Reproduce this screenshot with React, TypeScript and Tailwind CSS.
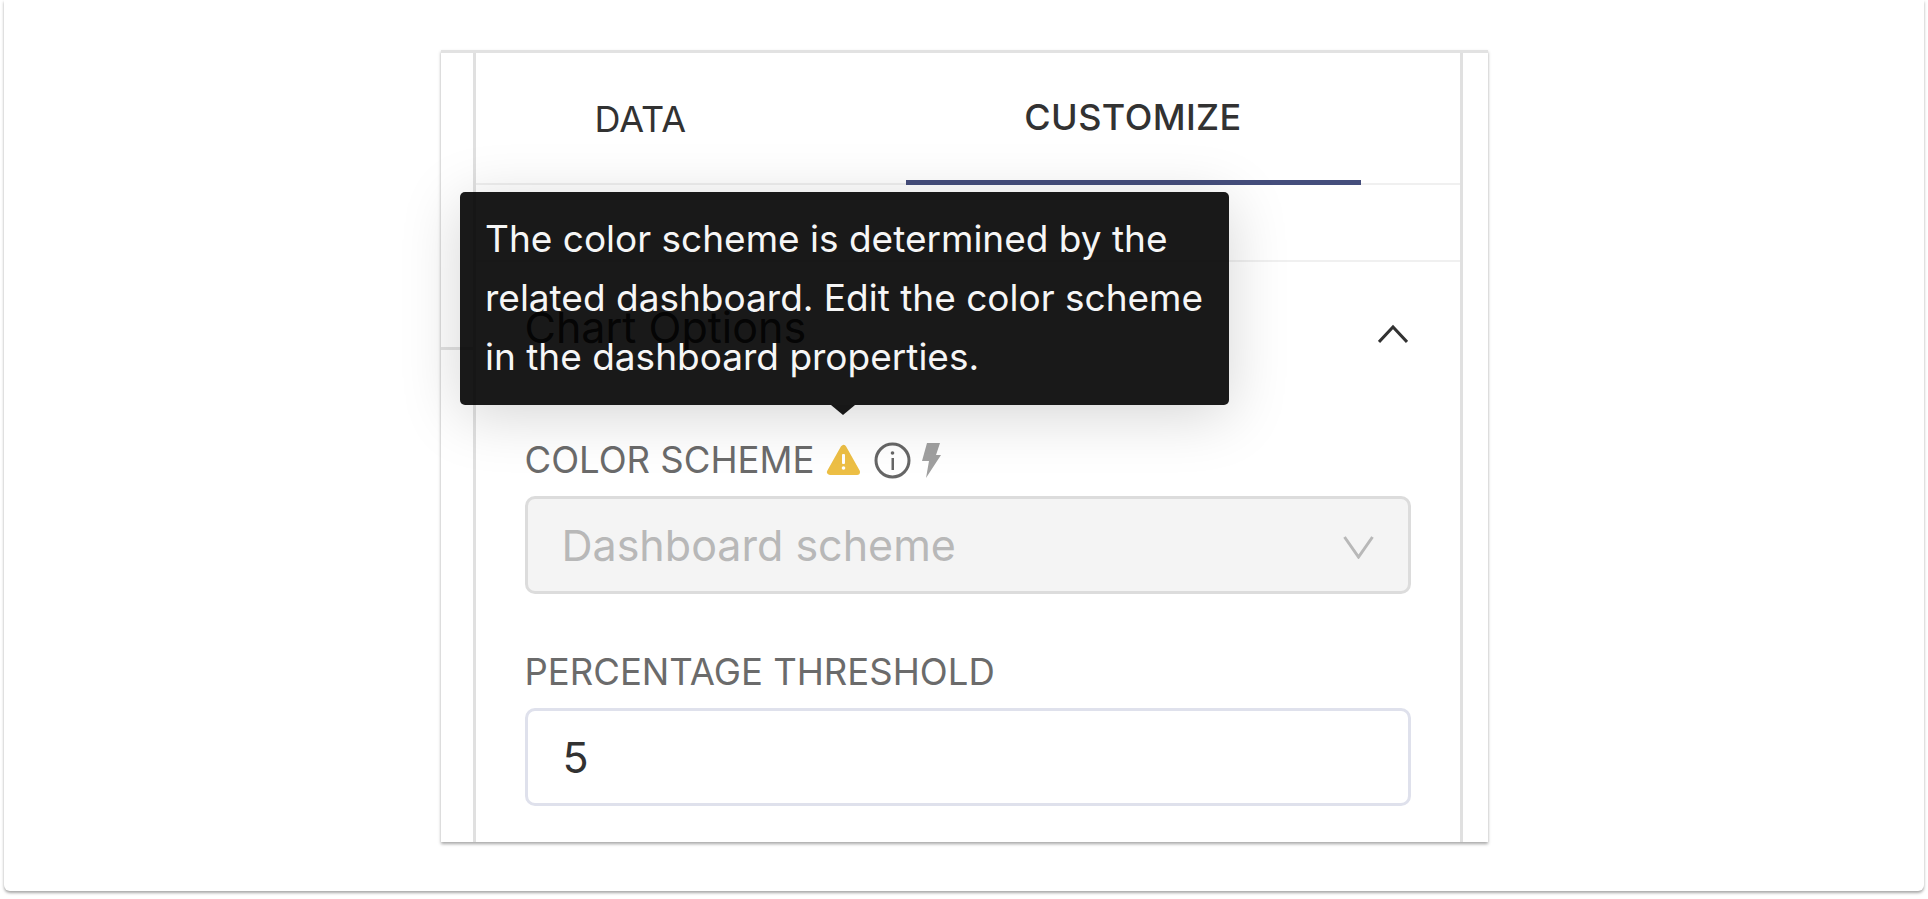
import React from "react";

const App: React.FC = () => {
  return (
    <div className="relative h-[899px] overflow-hidden bg-white font-['Inter',sans-serif]">
      <div className="mx-[4px] h-[891px] rounded-b-[6px] bg-white pt-[50px] shadow-[0_2px_3px_rgba(0,0,0,0.35)]">
        <div className="mx-auto flex h-[792px] w-[1047px] border-t-[3px] border-[#e2e2e2] bg-white shadow-[0_2px_3px_rgba(0,0,0,0.35)]">
          <div className="w-[32px] shrink-0">
            {/* stray section line that pokes out beside the tooltip */}
            <div className="mt-[294px] h-[3px] bg-[#e2e2e2]" />
          </div>
          <div className="flex flex-1 flex-col border-x-[3px] border-x-[#e0e0e0]">
            {/* tabs */}
            <div className="flex h-[132px] shrink-0 border-b-[2px] border-[#f0f0f0] text-[36px] text-[#323232]">
              <div className="flex w-[430px] items-center pl-[119px] pt-[1px]">DATA</div>
              <div className="-mb-[2px] flex w-[455px] items-center justify-center border-b-[5px] border-[#454e7c] pt-[1px] font-medium tracking-[0.4px]">
                CUSTOMIZE
              </div>
            </div>
            <div className="h-[77px] shrink-0 border-b-[2px] border-[#f0f0f0]" />

            {/* chart options */}
            <div className="flex flex-1 flex-col pl-[49px] pr-[49px]">
              <div className="flex h-[140px] shrink-0 items-center justify-between pr-[3px] text-[43px] text-[#323232]">
                <span className="-mt-[9px]">Chart Options</span>
                <svg className="mt-[3px]" width="30" height="20" viewBox="0 0 30 20" fill="none" stroke="#323232" strokeWidth="3">
                  <path d="M1 18 15 3l14 15" />
                </svg>
              </div>
              <div className="mt-[36px] flex h-[44px] items-center text-[36.5px] uppercase text-[#6b6b6b]">
                <span>Color scheme</span>
                <svg className="ml-[12px]" width="35" height="32" viewBox="0 0 35 32">
                  <path d="M17.5 4 4 28h27z" fill="#edbf45" stroke="#edbf45" strokeWidth="6" strokeLinejoin="round" />
                  <rect x="16" y="10" width="3" height="10" rx="1" fill="#fff" />
                  <circle cx="17.5" cy="24" r="1.8" fill="#fff" />
                </svg>
                <svg className="ml-[13px]" width="37" height="37" viewBox="0 0 37 37" fill="none">
                  <circle cx="18.5" cy="18.5" r="16.5" stroke="#666666" strokeWidth="3" />
                  <rect x="17.5" y="16" width="2.5" height="12" fill="#666666" />
                  <circle cx="18.5" cy="11" r="1.8" fill="#666666" />
                </svg>
                <svg className="ml-[10px]" width="20" height="35" viewBox="0 0 20 35">
                  <path d="M6 0h13l-4 12h5L5 35l3-17H1z" fill="#a0a0a0" />
                </svg>
              </div>
              <div className="mt-[14px] flex h-[98px] items-center justify-between rounded-[10px] border-[3px] border-[#dcdcdc] bg-[#f4f4f4] pl-[34px] pr-[34px] text-[43px] text-[#b8b8b8]">
                <span>Dashboard scheme</span>
                <svg className="mt-[3px]" width="31" height="24" viewBox="0 0 31 24" fill="none" stroke="#b8b8b8" strokeWidth="3">
                  <path d="M1.5 2l14 20 14-20" />
                </svg>
              </div>
              <div className="mt-[56px] flex h-[44px] items-center text-[36.5px] uppercase text-[#6b6b6b]">
                Percentage threshold
              </div>
              <div className="mt-[14px] flex h-[98px] items-center rounded-[10px] border-[3px] border-[#dfe1ec] pl-[35px] text-[43px] text-[#323232]">
                5
              </div>
            </div>
          </div>
          <div className="w-[25px] shrink-0" />
        </div>
      </div>

      {/* tooltip */}
      <div className="absolute left-[460px] top-[192px] h-[213px] w-[769px] rounded-[5px] bg-black/90 px-[25px] py-[17px] text-[37px] leading-[59px] text-[#f6f6f6] shadow-[0_10px_60px_rgba(0,0,0,0.17)]">
        The color scheme is determined by the related dashboard. Edit the color scheme in the dashboard properties.
        <div className="absolute left-[371px] top-full h-0 w-0 border-x-[12px] border-t-[10px] border-x-transparent border-t-black/90" />
      </div>
    </div>
  );
};

export default App;
